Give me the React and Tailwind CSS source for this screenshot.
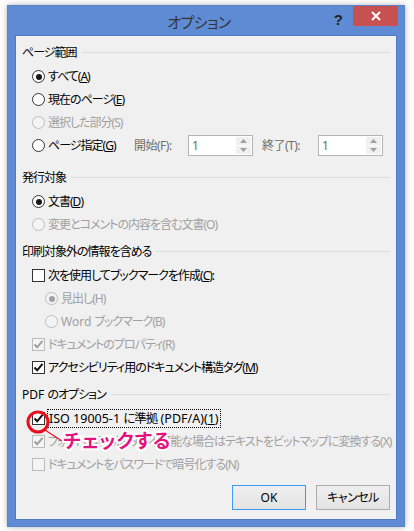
import React from "react";

const FONT = "font-['Noto_Sans','Noto_Sans_CJK_JP',sans-serif] [font-feature-settings:'palt']";

function Radio({ checked, disabled }) {
  return (
    <span
      className={`flex items-center justify-center w-[13px] h-[13px] rounded-full border shrink-0 ${
        disabled ? "border-[#bcbcbc] bg-[#f4f4f4]" : "border-[#333] bg-white"
      }`}
    >
      {checked && (
        <span className={`w-[6px] h-[6px] rounded-full ${disabled ? "bg-[#a0a0a0]" : "bg-[#1a1a1a]"}`} />
      )}
    </span>
  );
}

function Check({ checked, disabled }) {
  return (
    <span
      className={`flex items-center justify-center w-[13px] h-[13px] border shrink-0 ${
        disabled ? "border-[#bcbcbc] bg-[#f4f4f4]" : "border-[#333] bg-white"
      }`}
    >
      {checked && (
        <svg width="11" height="11" viewBox="0 0 11 11">
          <path d="M1.5 5.5 L4.2 8.3 L9.5 1.8" fill="none" stroke={disabled ? "#a0a0a0" : "#111"} strokeWidth="2" />
        </svg>
      )}
    </span>
  );
}

function Heading({ children, className = "" }) {
  return (
    <div className={`flex items-center h-[25px] pl-[6px] pr-[6px] ${className}`}>
      <span className="text-[#000] whitespace-nowrap">{children}</span>
      <span className="flex-1 h-px bg-[#dcdcdc] ml-[5px]" />
    </div>
  );
}

function Item({ kind, checked, disabled, indent, children }) {
  return (
    <div className={`flex items-center h-[23px] ${indent ? "pl-[29px]" : "pl-[16px]"}`}>
      {kind === "radio" ? <Radio checked={checked} disabled={disabled} /> : <Check checked={checked} disabled={disabled} />}
      <span className={`ml-[3px] whitespace-nowrap ${disabled ? "text-[#a0a0a0]" : "text-black"}`}>{children}</span>
    </div>
  );
}

function Spin() {
  return (
    <div className="flex w-[65px] h-[21px] border border-[#b4b4b4] bg-white tracking-normal">
      <span className="flex-1 pl-[3px] leading-[19px] text-[#6d6d6d]">1</span>
      <div className="flex flex-col w-[17px] p-px gap-px">
        <div className="flex-1 flex items-center justify-center bg-[#f0f0f0]">
          <svg width="7" height="4" viewBox="0 0 7 4"><path d="M0 4 L3.5 0 L7 4Z" fill="#a0a0a0" /></svg>
        </div>
        <div className="flex-1 flex items-center justify-center bg-[#f0f0f0]">
          <svg width="7" height="4" viewBox="0 0 7 4"><path d="M0 0 L3.5 4 L7 0Z" fill="#a0a0a0" /></svg>
        </div>
      </div>
    </div>
  );
}

export default function App() {
  return (
    <div className={`w-[414px] h-[531px] bg-white pt-[5px] pl-[7px] text-[12px] ${FONT}`}>
      <div className="relative w-[398px] h-[522px] bg-[#5f8bd4] border border-[#5783cc] shadow-[0_0_6px_rgba(0,0,0,0.3)] flex flex-col">
        {/* title bar */}
        <div className="flex items-start h-[29px]">
          <div className="flex-1 flex justify-center pt-[5px] pl-[56px]">
            <span className="text-[15px] text-[#333] tracking-[-0.5px]">オプション</span>
          </div>
          <span className="mt-[3px] mr-[10px] text-[15px] font-bold text-[#222] font-['Liberation_Sans',sans-serif]">?</span>
          <div className="w-[45px] h-[20px] mr-[6px] bg-[#c75050] flex items-center justify-center">
            <svg width="10" height="10" viewBox="0 0 10 10">
              <path d="M1 1 L9 9 M9 1 L1 9" stroke="white" strokeWidth="2" />
            </svg>
          </div>
        </div>
        {/* client */}
        <div className="flex-1 mx-[7px] mb-[6px] bg-[#f0f0f0] border border-[#4f79c2] flex flex-col pt-[4px] tracking-[-1px]">
          <Heading>ページ範囲</Heading>
          <Item kind="radio" checked>すべて(<u>A</u>)</Item>
          <Item kind="radio">現在のページ(<u>E</u>)</Item>
          <Item kind="radio" disabled>選択した部分(S)</Item>
          <div className="flex items-center h-[23px] pl-[16px]">
            <Radio />
            <span className="ml-[3px] whitespace-nowrap w-[86px]">ページ指定(<u>G</u>)</span>
            <span className="text-[#6d6d6d] w-[54px] whitespace-nowrap tracking-[-0.5px]">開始(F):</span>
            <Spin />
            <span className="text-[#6d6d6d] ml-[9px] w-[56px] whitespace-nowrap tracking-[-0.5px]">終了(T):</span>
            <Spin />
          </div>

          <Heading className="mt-[8px]">発行対象</Heading>
          <Item kind="radio" checked>文書(<u>D</u>)</Item>
          <Item kind="radio" disabled>変更とコメントの内容を含む文書(O)</Item>

          <Heading className="mt-[3px]">印刷対象外の情報を含める</Heading>
          <Item kind="check">次を使用してブックマークを作成(<u>C</u>):</Item>
          <Item kind="radio" checked disabled indent>見出し(H)</Item>
          <Item kind="radio" disabled indent><span className="tracking-[0px]">Word </span>ブックマーク(B)</Item>
          <Item kind="check" checked disabled>ドキュメントのプロパティ(R)</Item>
          <Item kind="check" checked>アクセシビリティ用のドキュメント構造タグ(<u>M</u>)</Item>

          <Heading className="mt-[3px]"><span className="tracking-[0px]">PDF </span>のオプション</Heading>
          <div className="flex items-center h-[23px] pl-[16px]">
            <Check checked />
            <span className="ml-[2px] px-px border border-dotted border-black whitespace-nowrap leading-[17px] text-[12.5px] tracking-[0px]">
              ISO 19005-1 <span className="tracking-[-1px]">に準拠</span> (PDF/A)(<u>1</u>)
            </span>
          </div>
          <Item kind="check" checked disabled>フォントの埋め込みが不可能な場合はテキストをビットマップに変換する(X)</Item>
          <Item kind="check" disabled>ドキュメントをパスワードで暗号化する(N)</Item>

          <div className="flex justify-end gap-[10px] mt-[9px] pr-[6px] tracking-normal">
            <button className="w-[74px] h-[25px] border border-[#3c9bef] bg-[linear-gradient(#efefef,#e3e3e3)] text-black">OK</button>
            <button className="w-[74px] h-[25px] border border-[#acacac] bg-[linear-gradient(#efefef,#e3e3e3)] text-black tracking-[-0.5px]">キャンセル</button>
          </div>
        </div>

        {/* annotation overlay */}
        <svg className="absolute left-[17px] top-[401px]" width="60" height="50" viewBox="0 0 60 50">
          <circle cx="13" cy="15" r="10" fill="none" stroke="#e8101e" strokeWidth="3" />
          <path d="M20 23 L40 36" stroke="#e8101e" strokeWidth="1.2" />
        </svg>
        <span className="absolute left-[55px] top-[421px] text-[19px] font-bold text-[#e4147f] tracking-[1px] [-webkit-text-stroke:4px_white] [paint-order:stroke_fill] whitespace-nowrap">
          チェックする
        </span>
      </div>
    </div>
  );
}
